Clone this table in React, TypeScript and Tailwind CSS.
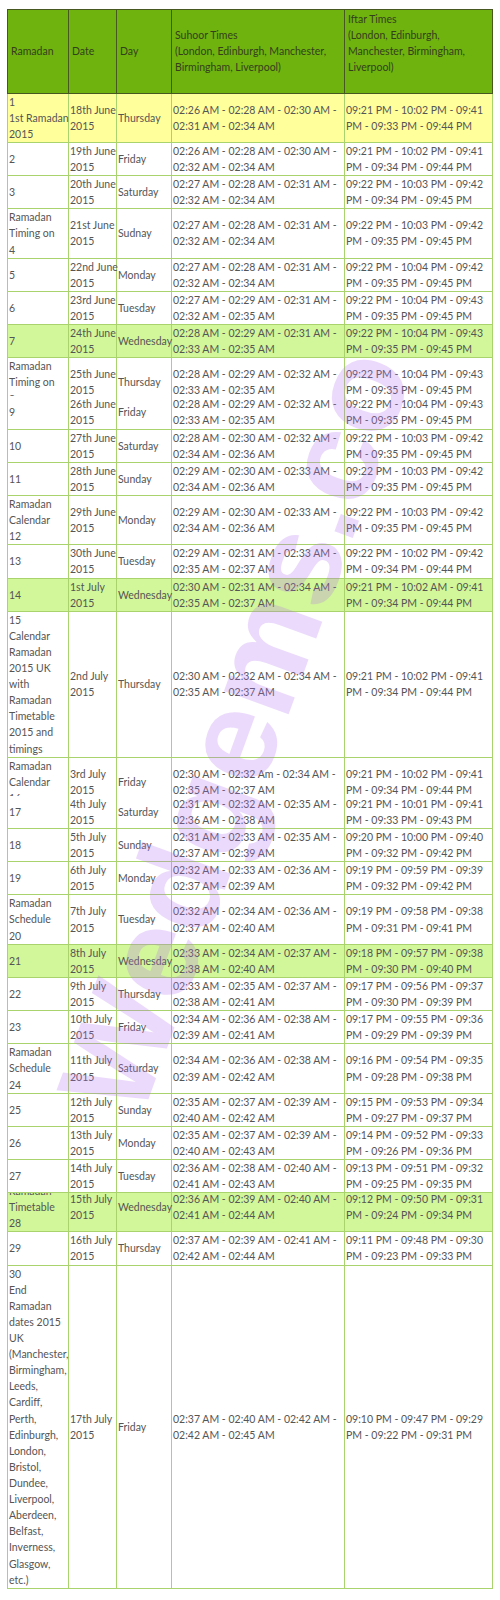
import { clsx } from "clsx";

type Row = {
  ramadan: string[];
  date: string;
  day: string;
  suhoor: [string, string];
  iftar: [string, string];
  tone?: "yellow" | "green";
  clip?: "bottom" | "top";
};

const cols = "grid grid-cols-[62px_48px_55px_173px_148px]";

const rows: Row[] = [
  { ramadan: ["1", "1st Ramadan", "2015"], date: "18th June", day: "Thursday", suhoor: ["02:26 AM - 02:28 AM - 02:30 AM -", "02:31 AM - 02:34 AM"], iftar: ["09:21 PM - 10:02 PM - 09:41", "PM - 09:33 PM - 09:44 PM"], tone: "yellow" },
  { ramadan: ["2"], date: "19th June", day: "Friday", suhoor: ["02:26 AM - 02:28 AM - 02:30 AM -", "02:32 AM - 02:34 AM"], iftar: ["09:21 PM - 10:02 PM - 09:41", "PM - 09:34 PM - 09:44 PM"] },
  { ramadan: ["3"], date: "20th June", day: "Saturday", suhoor: ["02:27 AM - 02:28 AM - 02:31 AM -", "02:32 AM - 02:34 AM"], iftar: ["09:22 PM - 10:03 PM - 09:42", "PM - 09:34 PM - 09:45 PM"] },
  { ramadan: ["Ramadan", "Timing on", "4"], date: "21st June", day: "Sudnay", suhoor: ["02:27 AM - 02:28 AM - 02:31 AM -", "02:32 AM - 02:34 AM"], iftar: ["09:22 PM - 10:03 PM - 09:42", "PM - 09:35 PM - 09:45 PM"] },
  { ramadan: ["5"], date: "22nd June", day: "Monday", suhoor: ["02:27 AM - 02:28 AM - 02:31 AM -", "02:32 AM - 02:34 AM"], iftar: ["09:22 PM - 10:04 PM - 09:42", "PM - 09:35 PM - 09:45 PM"] },
  { ramadan: ["6"], date: "23rd June", day: "Tuesday", suhoor: ["02:27 AM - 02:29 AM - 02:31 AM -", "02:32 AM - 02:35 AM"], iftar: ["09:22 PM - 10:04 PM - 09:43", "PM - 09:35 PM - 09:45 PM"] },
  { ramadan: ["7"], date: "24th June", day: "Wednesday", suhoor: ["02:28 AM - 02:29 AM - 02:31 AM -", "02:33 AM - 02:35 AM"], iftar: ["09:22 PM - 10:04 PM - 09:43", "PM - 09:35 PM - 09:45 PM"], tone: "green" },
  { ramadan: ["Ramadan", "Timing on", "8"], date: "25th June", day: "Thursday", suhoor: ["02:28 AM - 02:29 AM - 02:32 AM -", "02:33 AM - 02:35 AM"], iftar: ["09:22 PM - 10:04 PM - 09:43", "PM - 09:35 PM - 09:45 PM"], clip: "bottom" },
  { ramadan: ["9"], date: "26th June", day: "Friday", suhoor: ["02:28 AM - 02:29 AM - 02:32 AM -", "02:33 AM - 02:35 AM"], iftar: ["09:22 PM - 10:04 PM - 09:43", "PM - 09:35 PM - 09:45 PM"] },
  { ramadan: ["10"], date: "27th June", day: "Saturday", suhoor: ["02:28 AM - 02:30 AM - 02:32 AM -", "02:34 AM - 02:36 AM"], iftar: ["09:22 PM - 10:03 PM - 09:42", "PM - 09:35 PM - 09:45 PM"] },
  { ramadan: ["11"], date: "28th June", day: "Sunday", suhoor: ["02:29 AM - 02:30 AM - 02:33 AM -", "02:34 AM - 02:36 AM"], iftar: ["09:22 PM - 10:03 PM - 09:42", "PM - 09:35 PM - 09:45 PM"] },
  { ramadan: ["Ramadan", "Calendar", "12"], date: "29th June", day: "Monday", suhoor: ["02:29 AM - 02:30 AM - 02:33 AM -", "02:34 AM - 02:36 AM"], iftar: ["09:22 PM - 10:03 PM - 09:42", "PM - 09:35 PM - 09:45 PM"] },
  { ramadan: ["13"], date: "30th June", day: "Tuesday", suhoor: ["02:29 AM - 02:31 AM - 02:33 AM -", "02:35 AM - 02:37 AM"], iftar: ["09:22 PM - 10:02 PM - 09:42", "PM - 09:34 PM - 09:44 PM"] },
  { ramadan: ["14"], date: "1st July", day: "Wednesday", suhoor: ["02:30 AM - 02:31 AM - 02:34 AM -", "02:35 AM - 02:37 AM"], iftar: ["09:21 PM - 10:02 AM - 09:41", "PM - 09:34 PM - 09:44 PM"], tone: "green" },
  { ramadan: ["15", "Calendar", "Ramadan", "2015 UK", "with", "Ramadan", "Timetable", "2015 and", "timings"], date: "2nd July", day: "Thursday", suhoor: ["02:30 AM - 02:32 AM - 02:34 AM -", "02:35 AM - 02:37 AM"], iftar: ["09:21 PM - 10:02 PM - 09:41", "PM - 09:34 PM - 09:44 PM"] },
  { ramadan: ["Ramadan", "Calendar", "16"], date: "3rd July", day: "Friday", suhoor: ["02:30 AM - 02:32 Am - 02:34 AM -", "02:35 AM - 02:37 AM"], iftar: ["09:21 PM - 10:02 PM - 09:41", "PM - 09:34 PM - 09:44 PM"], clip: "bottom" },
  { ramadan: ["17"], date: "4th July", day: "Saturday", suhoor: ["02:31 AM - 02:32 AM - 02:35 AM -", "02:36 AM - 02:38 AM"], iftar: ["09:21 PM - 10:01 PM - 09:41", "PM - 09:33 PM - 09:43 PM"] },
  { ramadan: ["18"], date: "5th July", day: "Sunday", suhoor: ["02:31 AM - 02:33 AM - 02:35 AM -", "02:37 AM - 02:39 AM"], iftar: ["09:20 PM - 10:00 PM - 09:40", "PM - 09:32 PM - 09:42 PM"] },
  { ramadan: ["19"], date: "6th July", day: "Monday", suhoor: ["02:32 AM - 02:33 AM - 02:36 AM -", "02:37 AM - 02:39 AM"], iftar: ["09:19 PM - 09:59 PM - 09:39", "PM - 09:32 PM - 09:42 PM"] },
  { ramadan: ["Ramadan", "Schedule", "20"], date: "7th July", day: "Tuesday", suhoor: ["02:32 AM - 02:34 AM - 02:36 AM -", "02:37 AM - 02:40 AM"], iftar: ["09:19 PM - 09:58 PM - 09:38", "PM - 09:31 PM - 09:41 PM"] },
  { ramadan: ["21"], date: "8th July", day: "Wednesday", suhoor: ["02:33 AM - 02:34 AM - 02:37 AM -", "02:38 AM - 02:40 AM"], iftar: ["09:18 PM - 09:57 PM - 09:38", "PM - 09:30 PM - 09:40 PM"], tone: "green" },
  { ramadan: ["22"], date: "9th July", day: "Thursday", suhoor: ["02:33 AM - 02:35 AM - 02:37 AM -", "02:38 AM - 02:41 AM"], iftar: ["09:17 PM - 09:56 PM - 09:37", "PM - 09:30 PM - 09:39 PM"] },
  { ramadan: ["23"], date: "10th July", day: "Friday", suhoor: ["02:34 AM - 02:36 AM - 02:38 AM -", "02:39 AM - 02:41 AM"], iftar: ["09:17 PM - 09:55 PM - 09:36", "PM - 09:29 PM - 09:39 PM"] },
  { ramadan: ["Ramadan", "Schedule", "24"], date: "11th July", day: "Saturday", suhoor: ["02:34 AM - 02:36 AM - 02:38 AM -", "02:39 AM - 02:42 AM"], iftar: ["09:16 PM - 09:54 PM - 09:35", "PM - 09:28 PM - 09:38 PM"] },
  { ramadan: ["25"], date: "12th July", day: "Sunday", suhoor: ["02:35 AM - 02:37 AM - 02:39 AM -", "02:40 AM - 02:42 AM"], iftar: ["09:15 PM - 09:53 PM - 09:34", "PM - 09:27 PM - 09:37 PM"] },
  { ramadan: ["26"], date: "13th July", day: "Monday", suhoor: ["02:35 AM - 02:37 AM - 02:39 AM -", "02:40 AM - 02:43 AM"], iftar: ["09:14 PM - 09:52 PM - 09:33", "PM - 09:26 PM - 09:36 PM"] },
  { ramadan: ["27"], date: "14th July", day: "Tuesday", suhoor: ["02:36 AM - 02:38 AM - 02:40 AM -", "02:41 AM - 02:43 AM"], iftar: ["09:13 PM - 09:51 PM - 09:32", "PM - 09:25 PM - 09:35 PM"] },
  { ramadan: ["Ramadan", "Timetable", "28"], date: "15th July", day: "Wednesday", suhoor: ["02:36 AM - 02:39 AM - 02:40 AM -", "02:41 AM - 02:44 AM"], iftar: ["09:12 PM - 09:50 PM - 09:31", "PM - 09:24 PM - 09:34 PM"], tone: "green", clip: "top" },
  { ramadan: ["29"], date: "16th July", day: "Thursday", suhoor: ["02:37 AM - 02:39 AM - 02:41 AM -", "02:42 AM - 02:44 AM"], iftar: ["09:11 PM - 09:48 PM - 09:30", "PM - 09:23 PM - 09:33 PM"] },
  {
    ramadan: ["30", "End", "Ramadan", "dates 2015", "UK", "(Manchester,", "Birmingham,", "Leeds,", "Cardiff,", "Perth,", "Edinburgh,", "London,", "Bristol,", "Dundee,", "Liverpool,", "Aberdeen,", "Belfast,", "Inverness,", "Glasgow,", "etc.)"],
    date: "17th July",
    day: "Friday",
    suhoor: ["02:37 AM - 02:40 AM - 02:42 AM -", "02:42 AM - 02:45 AM"],
    iftar: ["09:10 PM - 09:47 PM - 09:29", "PM - 09:22 PM - 09:31 PM"],
  },
];

function Lines({ lines }: { lines: string[] }) {
  return (
    <>
      {lines.map((line, i) => (
        <span key={i} className="block whitespace-nowrap h-[16.12px]">
          {line}
        </span>
      ))}
    </>
  );
}

function TableRow({ row }: { row: Row }) {
  const cell = clsx(
    "flex flex-col justify-center border-r border-[#a9d36c] pl-px",
    row.clip === "bottom" && "h-[48.4px]",
    row.clip === "top" && "h-[48.4px] -mt-[10.4px]"
  );
  return (
    <div
      className={clsx(
        cols,
        row.tone === "yellow" && "bg-[#ffff9c]",
        row.tone === "green" && "bg-[#d2f79a]",
        row.clip === "bottom" ? "h-[38px] overflow-hidden" : "border-b border-[#a9d36c]",
        row.clip === "top" && "h-[39px] overflow-hidden"
      )}
    >
      <div className={clsx(cell, "border-l")}>
        <Lines lines={row.ramadan} />
      </div>
      <div className={cell}>
        <Lines lines={[row.date, "2015"]} />
      </div>
      <div className={cell}>
        <Lines lines={[row.day]} />
      </div>
      <div className={cell}>
        <Lines lines={row.suhoor} />
      </div>
      <div className={cell}>
        <Lines lines={row.iftar} />
      </div>
    </div>
  );
}

export default function App() {
  const head = "flex flex-col justify-center border-r border-[#46581f] py-px pl-[3px]";
  return (
    <div className="relative min-h-[1600px] w-[500px] overflow-hidden bg-white pl-[7px] pt-[9px] font-['Lato','Open_Sans',sans-serif] text-[10.5px] leading-[16.12px] text-[#555]">
      <div className="w-[486px]">
        <div className={clsx(cols, "border-y border-[#46581f] bg-[#6fb30f] text-[#34401c]")}>
          <div className={clsx(head, "border-l")}>
            <Lines lines={["Ramadan"]} />
          </div>
          <div className={head}>
            <Lines lines={["Date"]} />
          </div>
          <div className={head}>
            <Lines lines={["Day"]} />
          </div>
          <div className={head}>
            <Lines lines={["Suhoor Times", "(London, Edinburgh, Manchester,", "Birmingham, Liverpool)"]} />
          </div>
          <div className={head}>
            <Lines lines={["Iftar Times", "(London, Edinburgh,", "Manchester, Birmingham,", "Liverpool)", ""]} />
          </div>
        </div>
        {rows.map((row, i) => (
          <TableRow key={i} row={row} />
        ))}
      </div>

      {/* faint watermark over the table */}
      <div className="pointer-events-none absolute left-[235px] top-[730px] -translate-x-1/2 -translate-y-1/2 -rotate-[70deg] whitespace-nowrap font-['Liberation_Sans',sans-serif] text-[130px] font-bold leading-none text-[#b36ff0] opacity-25">
        Wedgems.co
      </div>
    </div>
  );
}
